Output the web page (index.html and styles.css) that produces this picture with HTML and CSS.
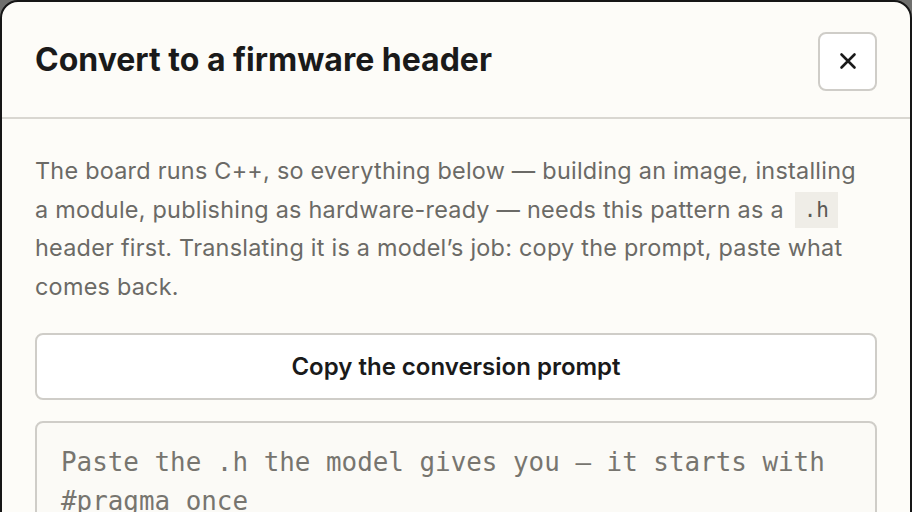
FILE: index.html
```html
<!DOCTYPE html>
<html lang="en">
<head>
<meta charset="utf-8">
<title>Convert to a firmware header</title>
<link rel="stylesheet" href="styles.css">
</head>
<body>
<div class="modal">
  <header class="modal-head">
    <h1 class="title">Convert to a firmware header</h1>
    <button class="close" aria-label="Close">
      <svg width="20" height="20" viewBox="0 0 20 20"><path d="M3.5 3.5 L16.5 16.5 M16.5 3.5 L3.5 16.5" stroke="#1a1a1a" stroke-width="2.6" stroke-linecap="round" fill="none"/></svg>
    </button>
  </header>
  <div class="modal-body">
    <p class="desc">The board runs C++, so everything below — building an image, installing a module, publishing as hardware-ready — needs this pattern as a <code class="code">.h</code> header first. Translating it is a model’s job: copy the prompt, paste what comes back.</p>
    <button class="copy">Copy the conversion prompt</button>
    <textarea class="paste" placeholder="Paste the .h the model gives you — it starts with #pragma once"></textarea>
  </div>
</div>
</body>
</html>
```
FILE: styles.css
```css
html, body {
  margin: 0;
  padding: 0;
  background: #6f6f6d;
  height: 100%;
  overflow: hidden;
}
.modal {
  box-sizing: border-box;
  width: 912px;
  height: 700px;
  background: #fdfcf8;
  border: 2px solid #161616;
  border-radius: 18px;
  font-family: Inter, "Liberation Sans", sans-serif;
}
.modal-head {
  height: 115px;
  display: flex;
  align-items: center;
  justify-content: space-between;
  padding: 0 33px;
  border-bottom: 2px solid #d9d7d1;
}
.title {
  margin: 0;
  font-size: 32px;
  font-weight: 700;
  color: #1a1a1a;
  letter-spacing: 0;
}
.close {
  width: 59px;
  height: 59px;
  box-sizing: border-box;
  border: 2px solid #cfcdc8;
  border-radius: 8px;
  background: #ffffff;
  display: flex;
  align-items: center;
  justify-content: center;
  padding: 0;
  margin-top: 3px;
}
.modal-body {
  padding: 33px 33px;
  display: flex;
  flex-direction: column;
}
.desc {
  margin: 0 0 27px;
  max-width: 832px;
  font-size: 23.4px;
  letter-spacing: 0.25px;
  line-height: 38.6px;
  color: #6b6a66;
}
.code {
  display: inline-block;
  font-family: "DejaVu Sans Mono", monospace;
  font-size: 21px;
  line-height: 36px;
  letter-spacing: 0;
  background: #efede7;
  color: #5a5955;
  padding: 0 9px;
  margin-left: 4px;
  vertical-align: top;
  margin-top: 1px;
}
.copy {
  height: 67px;
  box-sizing: border-box;
  border: 2px solid #cfcdc8;
  border-radius: 8px;
  background: #ffffff;
  font-family: Inter, "Liberation Sans", sans-serif;
  font-size: 24px;
  font-weight: 600;
  color: #1a1a1a;
  margin-bottom: 21px;
}
.paste {
  height: 200px;
  box-sizing: border-box;
  border: 2px solid #cfcdc8;
  border-radius: 8px;
  background: #fbfaf6;
  padding: 20px 24px;
  font-family: "DejaVu Sans Mono", monospace;
  font-size: 25.9px;
  line-height: 39px;
  resize: none;
  color: #333;
}
.paste::placeholder {
  color: #77756f;
}
```
